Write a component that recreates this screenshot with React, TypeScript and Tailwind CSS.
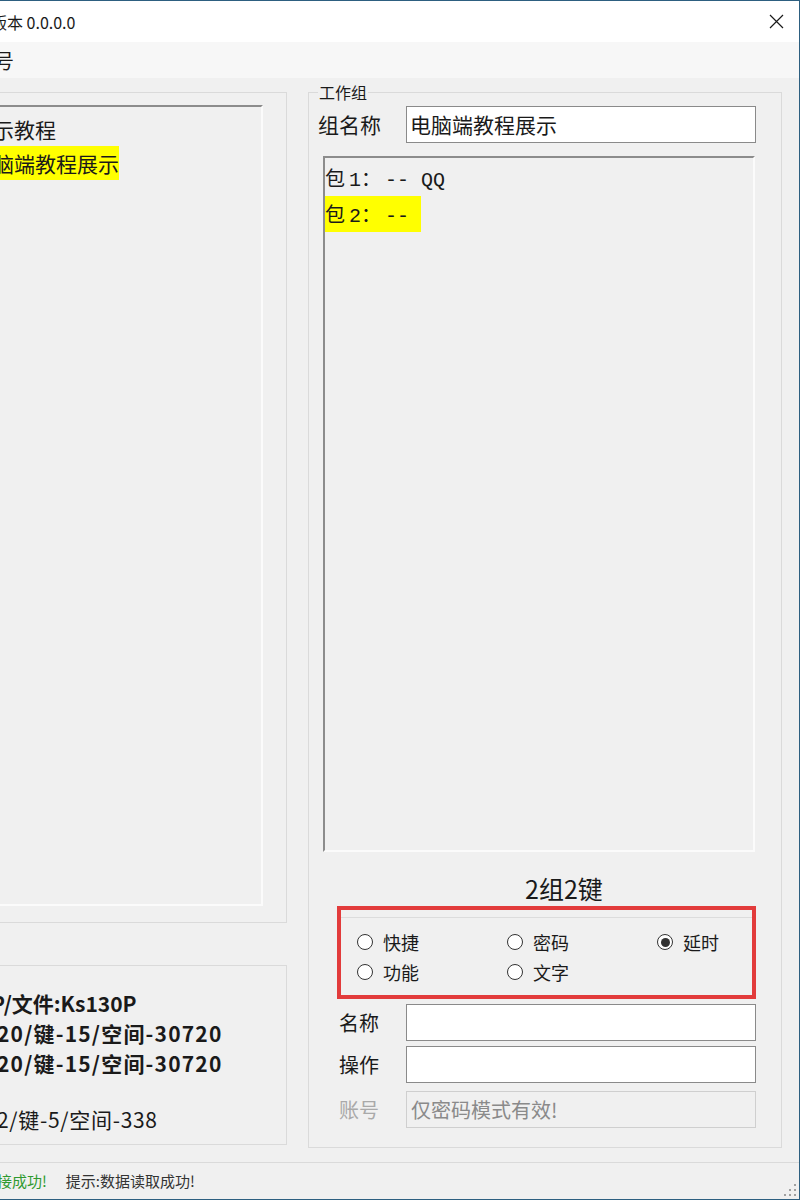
import { memo } from 'react';

const CJK = /[\u2e80-\uffef]/;

// Work-group listbox renders in a fixed grid: wide cells for CJK, narrow cells for ASCII
const GridText = ({ text }: { text: string }) => (
    <>
        {Array.from(text).map((ch, i) =>
            CJK.test(ch) ? (
                <span key={i} className="inline-block w-[24px]">{ch}</span>
            ) : (
                <span key={i} className="inline-block w-[12px] font-['Liberation_Mono',monospace]">
                    {ch === ' ' ? '\u00a0' : ch}
                </span>
            )
        )}
    </>
);

const Radio = ({ label, checked }: { label: string; checked?: boolean }) => (
    <div className="flex items-center gap-[10px] h-[30px]">
        <span className="w-[16px] h-[16px] rounded-full border border-[#333] bg-white flex items-center justify-center">
            {checked && <span className="w-[9px] h-[9px] rounded-full bg-[#333]" />}
        </span>
        <span className="text-[18px] leading-none">{label}</span>
    </div>
);

const FieldRow = ({ label, value, disabled, className }: { label: string; value?: string; disabled?: boolean; className: string }) => (
    <div className={`flex items-center h-[37px] ml-[30px] ${className}`}>
        <span className={`w-[67px] text-[20px] leading-none ${disabled ? 'text-[#a9a9a9]' : ''}`}>{label}</span>
        <div
            className={`w-[350px] h-full flex items-center pl-[4px] text-[20px] ${
                disabled ? 'bg-[#f0f0f0] border border-[#cfcfcf] text-[#8a8a8a]' : 'bg-white border border-[#8a8a8a]'
            }`}
        >
            {value}
        </div>
    </div>
);

const App = memo(() => {
    return (
        <div className="w-[800px] h-[1200px] overflow-hidden relative flex flex-col bg-[#f0f0f0] border-t border-r border-b border-[#2d5f80] text-[#1a1a1a] font-['Noto_Sans_CJK_SC','Noto_Sans',sans-serif]">
            {/* Title bar */}
            <div className="h-[41px] bg-white flex items-center shrink-0">
                <span className="ml-[-9px] text-[16px] whitespace-nowrap">版本 0.0.0.0</span>
                <div className="ml-auto w-[46px] h-full flex items-center justify-center">
                    <svg width="15" height="15" viewBox="0 0 15 15" aria-hidden="true">
                        <path d="M1 1L14 14M14 1L1 14" stroke="#1a1a1a" strokeWidth="1.2" fill="none" />
                    </svg>
                </div>
            </div>

            {/* Menu bar */}
            <div className="h-[36px] bg-[#f7f7f7] flex items-center shrink-0">
                <span className="ml-[-26px] text-[20px] whitespace-nowrap pt-[2px]">型号</span>
            </div>

            {/* Main area */}
            <div className="flex-1 flex pt-[14px]">
                {/* Left column */}
                <div className="w-[287px] flex flex-col">
                    <div className="h-[831px] border-t border-r border-b border-[#dadada]">
                        <div className="mt-[12px] w-[263px] h-[801px] border-t-2 border-[#8c8c8c] border-r-2 border-r-[#fbfbfb] border-b-2 border-b-[#fbfbfb] pt-[5px] overflow-hidden">
                            <div className="ml-[-28px] h-[34px] leading-[34px] text-[21px] whitespace-nowrap">演示教程</div>
                            <div className="ml-[-28px] h-[34px] leading-[34px] text-[21px] whitespace-nowrap">
                                <span className="inline-block h-full bg-[#ffff00]">电脑端教程展示</span>
                            </div>
                        </div>
                    </div>

                    <div className="mt-[42px] h-[180px] border-t border-r border-b border-[#dadada] pt-[22px] overflow-hidden">
                        <div className="text-[21px] leading-[30px] font-bold whitespace-nowrap">
                            <div className="ml-[-9px]">P/文件:Ks130P</div>
                            <div className="ml-[-3px] tracking-[1.2px]">20/键-15/空间-30720</div>
                            <div className="ml-[-3px] tracking-[1.2px]">20/键-15/空间-30720</div>
                        </div>
                        <div className="ml-[-3px] mt-[26px] text-[21px] leading-[30px] tracking-[0.7px] whitespace-nowrap">2/键-5/空间-338</div>
                    </div>
                </div>

                {/* Work group */}
                <div className="ml-[21px] w-[474px] h-[1056px] border border-[#dadada] relative flex flex-col">
                    <span className="absolute left-[9px] top-[-11px] px-[1px] bg-[#f0f0f0] text-[16px] leading-[20px]">工作组</span>

                    <div className="mt-[13px] ml-[9px] flex items-center h-[37px]">
                        <span className="w-[88px] text-[21px] leading-none">组名称</span>
                        <div className="w-[350px] h-full bg-white border border-[#8a8a8a] flex items-center pl-[3px] text-[21px]">
                            电脑端教程展示
                        </div>
                    </div>

                    <div className="mt-[13px] ml-[14px] w-[432px] h-[696px] border-t-2 border-l-2 border-[#8c8c8c] border-r-2 border-r-[#fbfbfb] border-b-2 border-b-[#fbfbfb] pt-[2px] text-[20px]">
                        <div className="h-[36px] leading-[36px] whitespace-nowrap">
                            <GridText text="包1：-- QQ" />
                        </div>
                        <div className="h-[36px] leading-[36px] whitespace-nowrap">
                            <span className="inline-block h-full bg-[#ffff00]">
                                <GridText text="包2：-- " />
                            </span>
                        </div>
                    </div>

                    <div className="mt-[21px] h-[30px] ml-[216px] text-[25px] leading-[30px]">2组2键</div>

                    {/* Key type selector */}
                    <div className="mt-[3px] ml-[28px] w-[419px] h-[93px] border-4 border-[#e23b3b]">
                        <div className="mt-[7px] border-t border-[#dcdcdc] pt-[9px] pl-[16px] grid grid-cols-[150px_150px_1fr]">
                            <Radio label="快捷" />
                            <Radio label="密码" />
                            <Radio label="延时" checked />
                            <Radio label="功能" />
                            <Radio label="文字" />
                        </div>
                    </div>

                    <FieldRow label="名称" className="mt-[5px]" />
                    <FieldRow label="操作" className="mt-[5px]" />
                    <FieldRow label="账号" value="仅密码模式有效!" disabled className="mt-[8px]" />
                </div>
            </div>

            {/* Status bar */}
            <div className="h-[37px] border-t border-[#dadada] flex items-center text-[15px] whitespace-nowrap shrink-0">
                <span className="ml-[-18px] text-[#2f9a2f]">连接成功!</span>
                <span className="ml-[19px] text-[#333]">提示:数据读取成功!</span>
            </div>

            {/* Resize grip */}
            <div className="absolute right-[3px] bottom-[3px] grid grid-cols-3 gap-[3px]">
                <span className="w-[2px] h-[2px]" />
                <span className="w-[2px] h-[2px]" />
                <span className="w-[2px] h-[2px] bg-[#a0a0a0]" />
                <span className="w-[2px] h-[2px]" />
                <span className="w-[2px] h-[2px] bg-[#a0a0a0]" />
                <span className="w-[2px] h-[2px] bg-[#a0a0a0]" />
                <span className="w-[2px] h-[2px] bg-[#a0a0a0]" />
                <span className="w-[2px] h-[2px] bg-[#a0a0a0]" />
                <span className="w-[2px] h-[2px] bg-[#a0a0a0]" />
            </div>
        </div>
    );
});

App.displayName = 'App';

export default App;
